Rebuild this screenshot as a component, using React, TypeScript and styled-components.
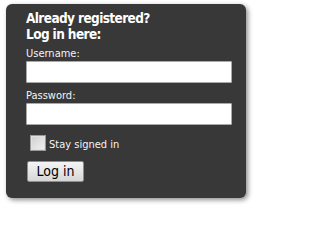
import React from 'react';
import styled, { createGlobalStyle } from 'styled-components';

const GlobalStyle = createGlobalStyle`
  html, body {
    margin: 0;
    padding: 0;
    background: #ffffff;
  }
`;

const Page = styled.div`
  padding: 4px 15px 14px 6px;
`;

const Panel = styled.form`
  width: 240px;
  box-sizing: border-box;
  padding: 6px 14px 16px 20px;
  background-color: #383838;
  border-radius: 6px;
  box-shadow: 2px 2px 5px rgba(0, 0, 0, 0.45);
  font-family: "DejaVu Sans Condensed", "DejaVu Sans", sans-serif;
  color: #ffffff;
  display: flex;
  flex-direction: column;
`;

const Title = styled.h2`
  margin: 0;
  font-size: 13.5px;
  letter-spacing: -0.6px;
  font-weight: bold;
  line-height: 16px;
`;

const Label = styled.label<{ $top: number }>`
  display: block;
  font-size: 11px;
  line-height: 13px;
  color: #f4f4f4;
  margin-top: ${(p) => p.$top}px;
  margin-bottom: 1px;
`;

const Input = styled.input`
  display: block;
  box-sizing: border-box;
  width: 206px;
  height: 22px;
  margin: 0;
  border: 1px solid #a9a9a9;
  border-radius: 1px;
  background: #ffffff;
  padding: 2px 4px;
`;

const CheckRow = styled.div`
  display: flex;
  align-items: flex-end;
  margin-top: 10px;
  padding-left: 4px;
`;

const Check = styled.span`
  width: 16px;
  height: 16px;
  box-sizing: border-box;
  border: 1px solid #9a9a9a;
  background: linear-gradient(135deg, #cfcfcf 0%, #f2f2f2 100%);
  box-shadow: inset 0 0 0 1px #e0e0e0;
`;

const CheckText = styled.span`
  font-size: 11px;
  line-height: 13px;
  color: #f4f4f4;
  margin-left: 3px;
`;

const Button = styled.button`
  margin-top: 10px;
  margin-left: 1px;
  align-self: flex-start;
  width: 57px;
  height: 21px;
  padding: 0;
  border: 1px solid #8e8e8e;
  border-radius: 2px;
  background: linear-gradient(#f4f4f4 0%, #e6e6e6 50%, #d6d6d6 100%);
  font-family: "DejaVu Sans Condensed", "DejaVu Sans", sans-serif;
  font-size: 14px;
  line-height: 17px;
  color: #000000;
`;

export default function App() {
  return (
    <>
      <GlobalStyle />
      <Page>
        <Panel onSubmit={(e) => e.preventDefault()}>
          <Title>
            Already registered?
            <br />
            Log in here:
          </Title>
          <Label $top={5}>Username:</Label>
          <Input type="text" />
          <Label $top={6}>Password:</Label>
          <Input type="password" />
          <CheckRow>
            <Check />
            <CheckText>Stay signed in</CheckText>
          </CheckRow>
          <Button type="submit">Log in</Button>
        </Panel>
      </Page>
    </>
  );
}
